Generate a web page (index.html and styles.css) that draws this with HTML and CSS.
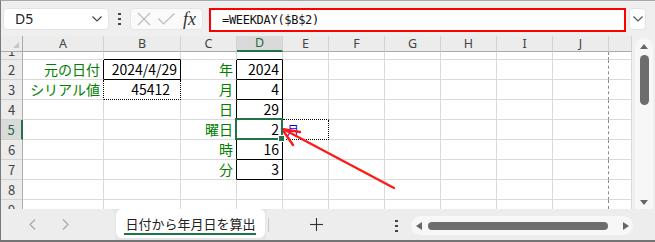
FILE: index.html
```html
<!DOCTYPE html>
<html lang="ja">
<head>
<meta charset="utf-8">
<title>Excel WEEKDAY</title>
<link rel="stylesheet" href="styles.css">
</head>
<body>
<div class="app">
  <div class="fbar">
    <div class="namebox">
      <span class="nb-text">D5</span>
      <svg class="nb-chev" width="10" height="6" viewBox="0 0 10 6"><polyline points="0.5,0.5 5,5 9.5,0.5" fill="none" stroke="#444" stroke-width="1.2"/></svg>
    </div>
    <div class="vdots"><i></i><i></i><i></i></div>
    <div class="fbtns">
      <svg width="14" height="14" viewBox="0 0 14 14"><g stroke="#bcbcbc" stroke-width="1.2"><line x1="1" y1="1" x2="13" y2="13"/><line x1="13" y1="1" x2="1" y2="13"/></g></svg>
      <svg width="17" height="12" viewBox="0 0 17 12"><polyline points="0.5,5.5 5.5,11 16.5,0.5" fill="none" stroke="#bcbcbc" stroke-width="1.2"/></svg>
      <span class="fx">fx</span>
    </div>
    <div class="finput">=WEEKDAY($B$2)</div>
    <div class="fexpand">
      <svg width="10" height="6" viewBox="0 0 10 6"><polyline points="0.5,0.5 5,5 9.5,0.5" fill="none" stroke="#555" stroke-width="1.2"/></svg>
    </div>
  </div>

  <div class="sheet">
    <div class="grid">
      <!-- header -->
      <div class="c h corner"><span class="tri-corner"></span></div>
      <div class="c h">A</div><div class="c h">B</div><div class="c h">C</div><div class="c h hs">D</div><div class="c h">E</div><div class="c h">F</div><div class="c h">G</div><div class="c h">H</div><div class="c h">I</div><div class="c h">J</div><div class="c h"></div>
      <!-- row 1 -->
      <div class="c r r1"><span>1</span></div>
      <div class="c"></div><div class="c bb"></div><div class="c"></div><div class="c bb"></div><div class="c"></div><div class="c"></div><div class="c"></div><div class="c"></div><div class="c"></div><div class="c pb"></div><div class="c"></div>
      <!-- row 2 -->
      <div class="c r">2</div>
      <div class="c g br">元の日付</div><div class="c br bb">2024/4/29</div><div class="c g br">年</div><div class="c br bb">2024</div><div class="c"></div><div class="c"></div><div class="c"></div><div class="c"></div><div class="c"></div><div class="c pb"></div><div class="c"></div>
      <!-- row 3 -->
      <div class="c r">3</div>
      <div class="c g brd">シリアル値</div><div class="c brd bbd serial">45412</div><div class="c g br">月</div><div class="c br bb">4</div><div class="c"></div><div class="c"></div><div class="c"></div><div class="c"></div><div class="c"></div><div class="c pb"></div><div class="c"></div>
      <!-- row 4 -->
      <div class="c r">4</div>
      <div class="c"></div><div class="c"></div><div class="c g br">日</div><div class="c br bb">29</div><div class="c bbd"></div><div class="c"></div><div class="c"></div><div class="c"></div><div class="c"></div><div class="c pb"></div><div class="c"></div>
      <!-- row 5 -->
      <div class="c r rs">5</div>
      <div class="c"></div><div class="c"></div><div class="c g br">曜日</div><div class="c br bb sel">2</div><div class="c bl brd bbd">月</div><div class="c"></div><div class="c"></div><div class="c"></div><div class="c"></div><div class="c pb"></div><div class="c"></div>
      <!-- row 6 -->
      <div class="c r">6</div>
      <div class="c"></div><div class="c"></div><div class="c g br">時</div><div class="c br bb">16</div><div class="c"></div><div class="c"></div><div class="c"></div><div class="c"></div><div class="c"></div><div class="c pb"></div><div class="c"></div>
      <!-- row 7 -->
      <div class="c r">7</div>
      <div class="c"></div><div class="c"></div><div class="c g br">分</div><div class="c br bb">3</div><div class="c"></div><div class="c"></div><div class="c"></div><div class="c"></div><div class="c"></div><div class="c pb"></div><div class="c"></div>
      <!-- row 8 -->
      <div class="c r">8</div>
      <div class="c"></div><div class="c"></div><div class="c"></div><div class="c"></div><div class="c"></div><div class="c"></div><div class="c"></div><div class="c"></div><div class="c"></div><div class="c pb"></div><div class="c"></div>
      <!-- row 9 (partial) -->
      <div class="c r z r9"><span>9</span></div>
      <div class="c z"></div><div class="c z"></div><div class="c z"></div><div class="c z"></div><div class="c z"></div><div class="c z"></div><div class="c z"></div><div class="c z"></div><div class="c z"></div><div class="c z pb"></div><div class="c z"></div>
    </div>
    <div class="vscroll">
      <div class="vtrack">
        <span class="tri-up"></span>
        <span class="vthumb"></span>
        <span class="vspace"></span>
        <span class="tri-down"></span>
      </div>
    </div>
  </div>

  <div class="tabbar">
    <div class="nav">
      <svg width="7" height="11" viewBox="0 0 7 11"><polyline points="6,0.5 1,5.5 6,10.5" fill="none" stroke="#a8a8a8" stroke-width="1.2"/></svg>
      <svg width="7" height="11" viewBox="0 0 7 11"><polyline points="1,0.5 6,5.5 1,10.5" fill="none" stroke="#a8a8a8" stroke-width="1.2"/></svg>
    </div>
    <div class="tab">日付から年月日を算出</div>
    <div class="rest">
      <span class="sep"></span>
      <svg class="plus" width="13" height="13" viewBox="0 0 13 13"><g stroke="#333" stroke-width="1.1"><line x1="6.5" y1="0" x2="6.5" y2="13"/><line x1="0" y1="6.5" x2="13" y2="6.5"/></g></svg>
      <div class="hdots"><i></i><i></i><i></i></div>
      <div class="hscroll">
        <span class="tri-left"></span>
        <span class="hthumb"></span>
        <span class="tri-right"></span>
      </div>
    </div>
  </div>
</div>
<svg class="arrow" width="655" height="242" viewBox="0 0 655 242">
  <g stroke="#ff1a1a" stroke-width="2.4" stroke-linecap="round" fill="none">
    <line x1="394" y1="188" x2="283" y2="129"/>
    <line x1="282" y1="129" x2="300" y2="132"/>
    <line x1="282" y1="129" x2="293" y2="145"/>
  </g>
</svg>
</body>
</html>
```
FILE: styles.css
```css
* { box-sizing: border-box; }
html, body { margin: 0; padding: 0; }
body {
  width: 655px;
  height: 242px;
  overflow: hidden;
  position: relative;
  background: #efefef;
  font-family: "Noto Sans", sans-serif;
}
.app {
  width: 655px;
  height: 242px;
  border-top: 1px solid #a8a8a8;
  border-left: 1px solid #7a7a7a;
  border-bottom: 2px solid #747474;
  background: #efefef;
  display: flex;
  flex-direction: column;
}

/* formula bar */
.fbar {
  height: 35px;
  display: flex;
  align-items: center;
  padding-left: 2px;
}
.namebox {
  width: 106px;
  height: 22px;
  background: #fff;
  border: 1px solid #e3e3e3;
  border-radius: 4px;
  display: flex;
  align-items: center;
  justify-content: space-between;
  padding: 0 6px 0 11px;
  margin-top: 1px;
}
.nb-text { font-size: 14px; color: #222; line-height: 16px; }
.nb-chev { display: block; }
.vdots {
  width: 3px;
  margin-left: 9px;
  display: flex;
  flex-direction: column;
  gap: 3px;
}
.vdots i, .hdots i { display: block; width: 3px; height: 2px; background: #444; }
.fbtns {
  margin-left: 9px;
  width: 73px;
  height: 22px;
  margin-top: 1px;
  background: #fafafa;
  border: 1px solid #e6e6e6;
  border-radius: 4px;
  display: flex;
  align-items: center;
  padding-left: 6px;
  gap: 7px;
}
.fbtns svg { display: block; }
.fx {
  font-family: "Liberation Serif", serif;
  font-style: italic;
  font-size: 18px;
  color: #333;
  line-height: 18px;
  margin-left: 1px;
}
.finput {
  margin-left: 6px;
  width: 417px;
  height: 24px;
  margin-top: 2px;
  background: #fff;
  border: 2px solid #ff0000;
  padding-left: 11px;
  font-family: "DejaVu Sans Mono", monospace;
  font-size: 12px;
  letter-spacing: -0.3px;
  line-height: 20px;
  color: #111;
}
.fexpand {
  margin-left: 3px;
  width: 17px;
  height: 22px;
  margin-top: 1px;
  background: #fff;
  border: 1px solid #e3e3e3;
  border-radius: 4px;
  display: flex;
  align-items: center;
  justify-content: center;
}
.fexpand svg { display: block; }

/* sheet */
.sheet {
  height: 173px;
  display: flex;
}
.grid {
  width: 631px;
  display: grid;
  grid-template-columns: 22px 81px 77px 56px 46px 46px 56px 56px 56px 56px 56px 23px;
  grid-template-rows: 16px 8px repeat(7, 20px) 9px;
  background: #fff;
}
.c {
  position: relative;
  border-right: 1px solid #dadada;
  border-bottom: 1px solid #dadada;
  display: flex;
  align-items: center;
  justify-content: flex-end;
  padding-right: 3px;
  font-family: "Noto Sans CJK JP", sans-serif;
  font-size: 14px;
  line-height: 19px;
  color: #000;
  white-space: nowrap;
  overflow: hidden;
}
.h {
  background: #ececec;
  border-right: 1px solid #d3d3d3;
  border-bottom: 1px solid #ababab;
  justify-content: center;
  padding: 0;
  font-family: "Noto Sans", sans-serif;
  font-size: 12.5px;
  line-height: 14px;
  color: #444;
  overflow: visible;
}
.hs {
  background: #dadada;
  color: #1d6b40;
  border-bottom: 2px solid #217346;
}
.corner {
  justify-content: flex-end;
  align-items: flex-end;
  padding: 0 3px 3px 0;
  border-right-color: #ababab;
}
.tri-corner {
  width: 0; height: 0;
  border-left: 6px solid transparent;
  border-bottom: 6px solid #c6c6c6;
}
.r {
  background: #ececec;
  border-right: 1px solid #ababab;
  border-bottom: 1px solid #d3d3d3;
  justify-content: center;
  padding: 0;
  font-size: 13px;
  color: #444;
}
.rs {
  background: #dadada;
  color: #1d6b40;
  border-right: 2px solid #217346;
}
.r1 { align-items: flex-end; }
.r1 span { line-height: 16px; }
.z { border-bottom: none; align-items: flex-start; }
.r9 span { line-height: 20px; }

.g { color: #008000; }
.bl { color: #0000ff; justify-content: flex-start; padding: 0 0 0 4px; font-size: 12px; }
.serial { padding-right: 10px; }

.br { border-right: 1px solid #000; }
.bb { border-bottom: 1px solid #000; }
.brd { border-right: 1px dotted #000; }
.bbd { border-bottom: 1px dotted #000; }
.pb { border-right: 1px dashed #8a8a8a; }

.sel { overflow: visible; z-index: 2; }
.sel::after {
  content: "";
  position: absolute;
  top: -2px; left: -2px; right: -1px; bottom: -1px;
  border: 2px solid #217346;
}
.sel::before {
  content: "";
  position: absolute;
  right: -2px; bottom: -2px;
  width: 5px; height: 5px;
  background: #217346;
  box-shadow: 0 0 0 1px #fff;
  z-index: 3;
}

/* vertical scrollbar */
.vscroll {
  width: 23px;
  padding: 2px 2px 0 3px;
}
.vtrack {
  height: 100%;
  background: #f7f7f7;
  border-radius: 9px 9px 0 0;
  display: flex;
  flex-direction: column;
  align-items: center;
  padding: 6px 0 4px;
}
.tri-up {
  width: 0; height: 0;
  border-left: 4px solid transparent;
  border-right: 4px solid transparent;
  border-bottom: 5px solid #666;
}
.vthumb {
  margin-top: 6px;
  width: 9px;
  height: 50px;
  border-radius: 5px;
  background: #6d6d6d;
}
.vspace { flex: 1; }
.tri-down {
  width: 0; height: 0;
  border-left: 4px solid transparent;
  border-right: 4px solid transparent;
  border-top: 5px solid #666;
}

/* tab bar */
.tabbar {
  height: 31px;
  display: flex;
  background: #e6e6e6;
}
.nav {
  width: 114px;
  background: #ededed;
  border-top-right-radius: 6px;
  display: flex;
  align-items: center;
  padding-left: 28px;
  gap: 26px;
}
.nav svg { display: block; }
.tab {
  margin-left: 1px;
  width: 149px;
  height: 29px;
  background: #fff;
  border-radius: 6px;
  position: relative;
  display: flex;
  align-items: center;
  justify-content: center;
  padding-bottom: 1px;
  font-family: "Noto Sans CJK JP", sans-serif;
  font-size: 13px;
  color: #222;
}
.tab::after {
  content: "";
  position: absolute;
  left: 8px; right: 9px; bottom: 3px;
  height: 2px;
  background: #217346;
}
.rest {
  flex: 1;
  margin-left: 1px;
  background: #ededed;
  border-top-left-radius: 6px;
  display: flex;
  align-items: center;
}
.sep { margin-left: 2px; width: 1px; height: 14px; background: #c8c8c8; }
.plus { display: block; margin-left: 41px; }
.hdots {
  margin-left: 72px;
  display: flex;
  flex-direction: column;
  gap: 3px;
  padding-top: 2px;
}
.hscroll {
  margin-left: 13px;
  width: 222px;
  height: 19px;
  margin-top: 2px;
  background: #f7f7f7;
  border-radius: 10px;
  display: flex;
  align-items: center;
  padding: 0 4px 0 5px;
}
.tri-left {
  width: 0; height: 0;
  border-top: 4px solid transparent;
  border-bottom: 4px solid transparent;
  border-right: 6px solid #666;
}
.hthumb {
  margin-left: 6px;
  width: 180px;
  height: 8px;
  border-radius: 4px;
  background: #6d6d6d;
}
.tri-right {
  margin-left: auto;
  width: 0; height: 0;
  border-top: 4px solid transparent;
  border-bottom: 4px solid transparent;
  border-left: 6px solid #666;
}

/* annotation arrow */
.arrow {
  position: absolute;
  top: 0;
  left: 0;
  pointer-events: none;
}
```
